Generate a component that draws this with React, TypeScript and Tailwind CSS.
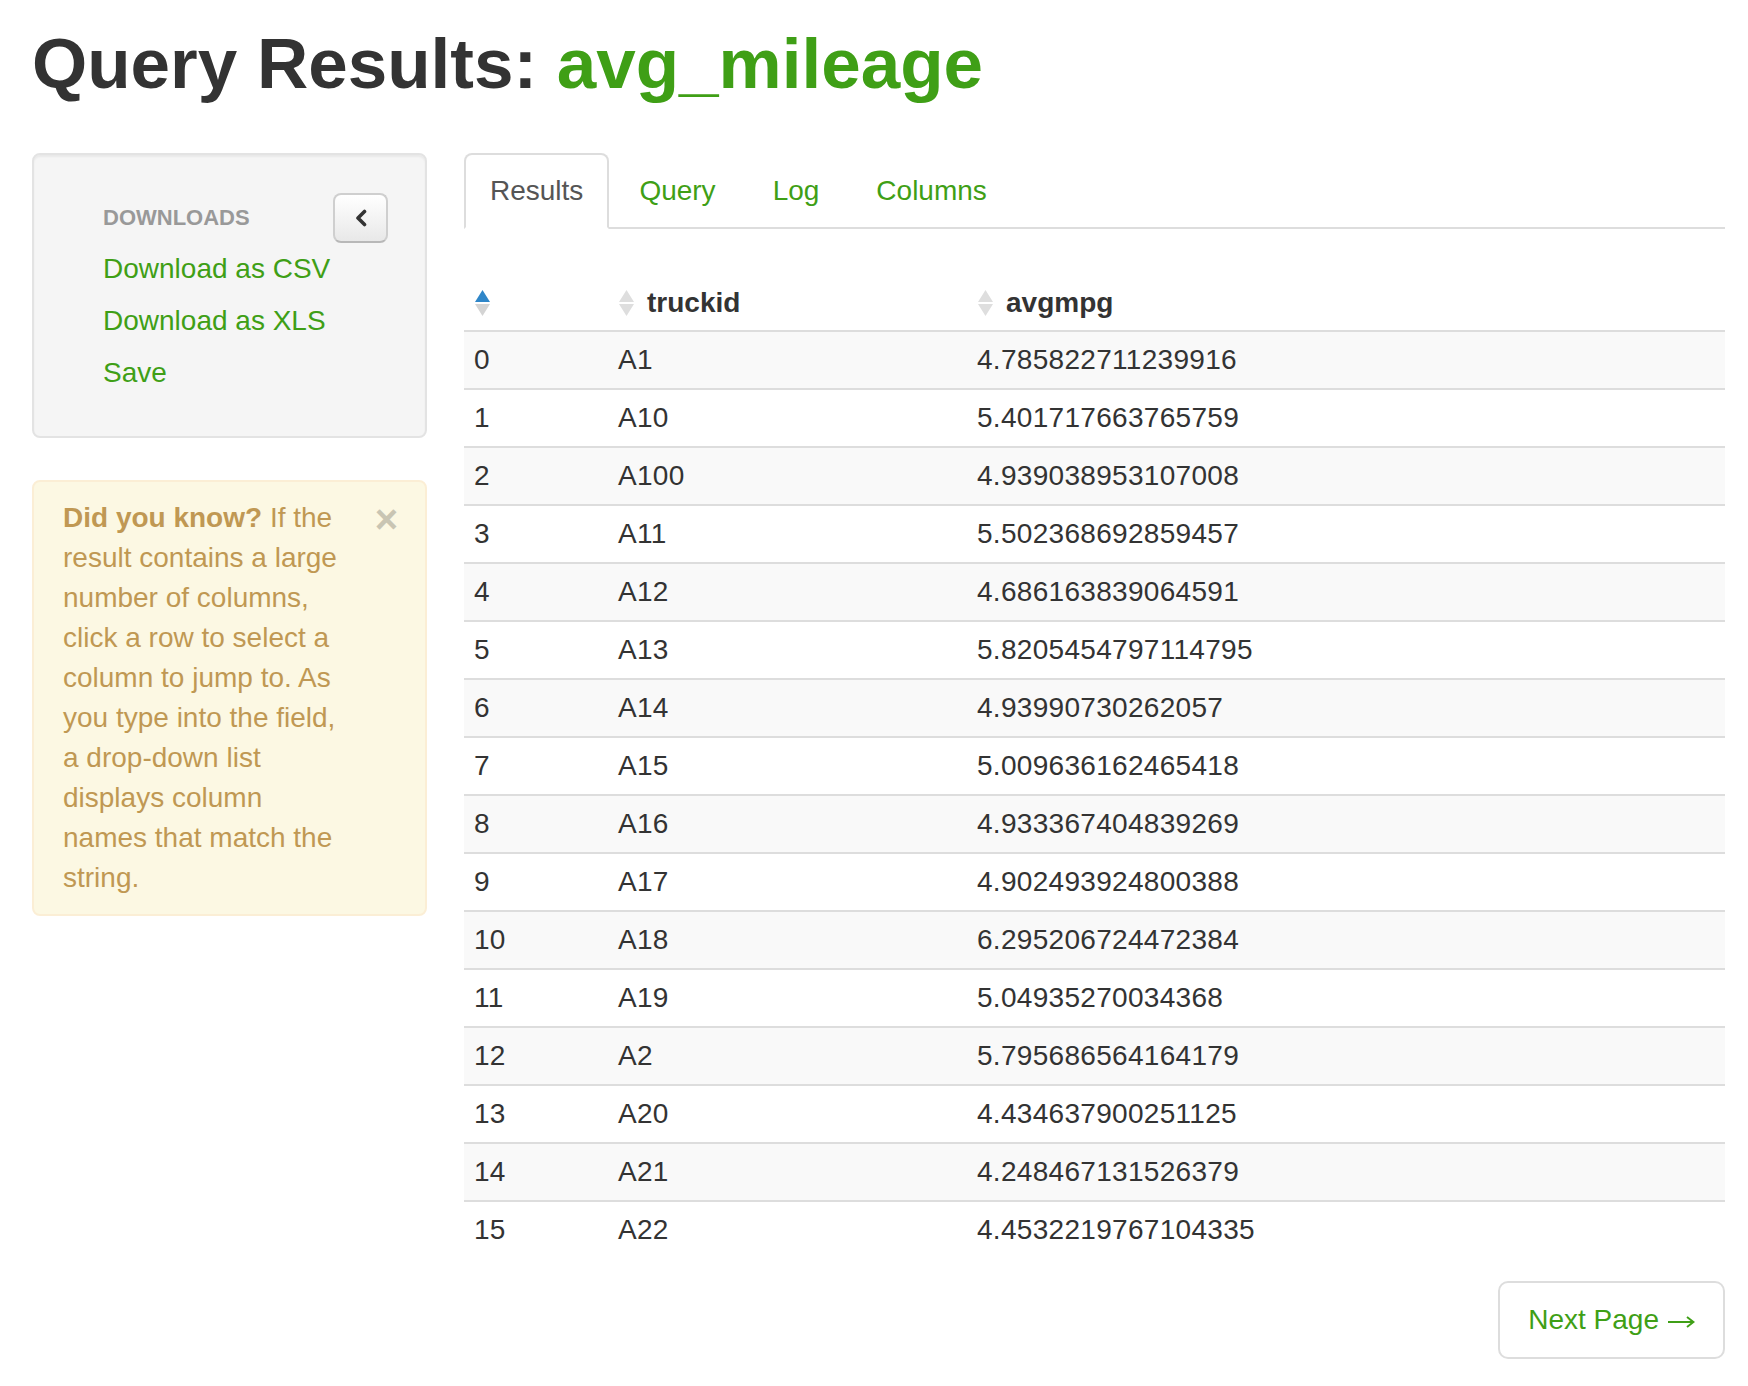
import React from 'react';

const rows: [string, string][] = [
  ['A1', '4.785822711239916'],
  ['A10', '5.401717663765759'],
  ['A100', '4.939038953107008'],
  ['A11', '5.502368692859457'],
  ['A12', '4.686163839064591'],
  ['A13', '5.8205454797114795'],
  ['A14', '4.93990730262057'],
  ['A15', '5.009636162465418'],
  ['A16', '4.933367404839269'],
  ['A17', '4.902493924800388'],
  ['A18', '6.295206724472384'],
  ['A19', '5.04935270034368'],
  ['A2', '5.795686564164179'],
  ['A20', '4.434637900251125'],
  ['A21', '4.248467131526379'],
  ['A22', '4.4532219767104335'],
];

const SortIcon = ({ active }: { active?: boolean }) => (
  <svg width="19" height="28" viewBox="0 0 19 28" className="shrink-0">
    <path d="M9.5 1 L17 13 L2 13 Z" fill={active ? '#2f86c8' : '#dedede'} />
    <path d="M2 15 L17 15 L9.5 27 Z" fill={active ? '#d4d4d4' : '#dedede'} />
  </svg>
);

const tabs = ['Query', 'Log', 'Columns'];

export default function App() {
  return (
    <div className="min-h-screen bg-white pl-[32px] pr-[23px] font-['Liberation_Sans',Arial,sans-serif] text-[#333]">
      <h1 className="pt-[28px] text-[71px] font-bold leading-[71px]">
        Query Results: <span className="text-[#3f9f16]">avg_mileage</span>
      </h1>

      <div className="mt-[54px] flex gap-[37px]">
        {/* sidebar */}
        <div className="w-[395px] shrink-0">
          <div className="rounded-[8px] border-2 border-[#e3e3e3] bg-[#f5f5f5] pb-[37px] pl-[69px] pr-[37px] pt-[43px] shadow-[inset_0_2px_2px_rgba(0,0,0,0.05)]">
            <div className="flex h-[40px] items-center justify-between">
              <span className="text-[22px] font-bold uppercase leading-[40px] text-[#999]">Downloads</span>
              <button className="flex h-[50px] w-[55px] shrink-0 items-center justify-center rounded-[8px] border-2 border-[#cfcfcf] border-b-[#b8b8b8] bg-gradient-to-b from-white to-[#e8e8e8]">
                <svg width="16" height="18" viewBox="0 0 16 18">
                  <polyline points="11.5,2.5 5,9 11.5,15.5" fill="none" stroke="#333" strokeWidth="3.6" strokeLinecap="round" strokeLinejoin="round" />
                </svg>
              </button>
            </div>
            <ul className="mt-[5px] text-[28px] leading-[40px] text-[#3f9f16]">
              <li className="py-[6px]">Download as CSV</li>
              <li className="py-[6px]">Download as XLS</li>
              <li className="py-[6px]">Save</li>
            </ul>
          </div>

          <div className="relative mt-[42px] rounded-[8px] border-2 border-[#fbeed5] bg-[#fcf8e3] py-[16px] pl-[29px] pr-[80px] text-[28px] leading-[40px] text-[#c09853]">
            <span className="absolute right-[27px] top-[17px] text-[40px] font-bold leading-[40px] text-[#c9c5b3]">×</span>
            <strong>Did you know?</strong> If the result contains a large number of columns, click a row to select a
            column to jump to. As you type into the field, a drop-down list displays column names that match the string.
          </div>
        </div>

        {/* main */}
        <div className="min-w-0 flex-1">
          <ul className="flex border-b-2 border-[#ddd] text-[28px] leading-[40px]">
            <li className="-mb-[2px] mr-[4px] rounded-t-[8px] border-2 border-[#ddd] border-b-transparent bg-white px-[24px] py-[16px] text-[#555]">
              Results
            </li>
            {tabs.map((t) => (
              <li key={t} className="-mb-[2px] mr-[5px] border-2 border-transparent px-[24px] py-[16px] text-[#3f9f16]">
                {t}
              </li>
            ))}
          </ul>

          <div className="mt-[47px] text-[28px] leading-[40px]">
            <div className="grid h-[56px] grid-cols-[144px_359px_1fr] items-center border-b-2 border-[#ddd] font-bold">
              <div className="flex items-center pl-[9px]">
                <SortIcon active />
              </div>
              <div className="flex items-center gap-[11px] pl-[9px]">
                <SortIcon />
                <span>truckid</span>
              </div>
              <div className="flex items-center gap-[11px] pl-[9px]">
                <SortIcon />
                <span>avgmpg</span>
              </div>
            </div>
            {rows.map(([id, mpg], i) => (
              <div
                key={id}
                className={`grid grid-cols-[144px_359px_1fr] items-center tracking-[0.3px] ${i > 0 ? 'h-[58px] border-t-2 border-[#ddd]' : 'h-[56px]'} ${i % 2 === 0 ? 'bg-[#f9f9f9]' : 'bg-white'}`}
              >
                <div className="pl-[10px]">{i}</div>
                <div className="pl-[10px]">{id}</div>
                <div className="pl-[10px]">{mpg}</div>
              </div>
            ))}
          </div>

          <div className="mt-[23px] flex justify-end">
            <button className="flex items-center gap-[8px] rounded-[10px] border-2 border-[#ddd] bg-white px-[28px] py-[17px] text-[28px] leading-[40px] text-[#3f9f16]">
              <span>Next Page</span>
              <svg width="28" height="14" viewBox="0 0 28 14" className="mt-[3px]">
                <path d="M1 7 H26 M20 2 L26.5 7 L20 12" fill="none" stroke="#3f9f16" strokeWidth="2" />
              </svg>
            </button>
          </div>
        </div>
      </div>
    </div>
  );
}
